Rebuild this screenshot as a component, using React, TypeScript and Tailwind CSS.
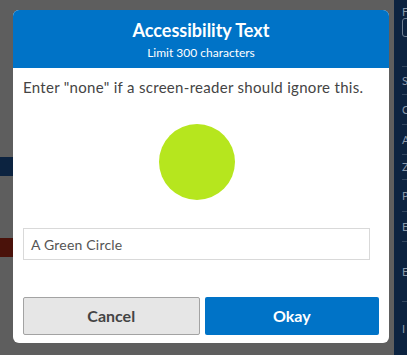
const font = { fontFamily: "Lato, 'Open Sans', sans-serif" };

type Section = { label?: string; h: number; box?: boolean };

const sections: Section[] = [
  { label: "F", h: 67, box: true },
  { label: "S", h: 28 },
  { label: "C", h: 30 },
  { label: "A", h: 30 },
  { label: "Z", h: 25 },
  { label: "P", h: 32 },
  { label: "E", h: 30 },
  { label: "E", h: 60 },
  { label: "I", h: 53 },
];

const Sidebar = () => (
  <div className="w-[13px] h-full bg-[#0c2340] pl-[8px] overflow-hidden shrink-0">
    {sections.map((s, i) => (
      <div key={i} className="flex flex-col" style={{ height: s.h }}>
        {s.box ? (
          <div className="flex flex-col pt-[6px]">
            <span className="text-[11px] leading-[12px] text-[#8a98aa]">{s.label}</span>
            <div className="w-[20px] h-[19px] border border-[#6f7f93] rounded-[3px]" />
          </div>
        ) : (
          <div className="flex-1 flex items-center">
            <span className="text-[11px] leading-[12px] text-[#8a98aa]">{s.label}</span>
          </div>
        )}
        {i < sections.length - 1 && <div className="mt-auto h-px w-[20px] bg-[#33475f]" />}
      </div>
    ))}
  </div>
);

export default function App() {
  return (
    <div className="w-[407px] h-[355px] bg-[#5e5e5e] flex overflow-hidden" style={font}>
      {/* left page strips behind the overlay */}
      <div className="w-[13px] shrink-0 flex flex-col">
        <div className="h-[157px]" />
        <div className="h-[19px] bg-[#0c2340]" />
        <div className="h-[62px]" />
        <div className="h-[19px] bg-[#4a120a]" />
      </div>

      {/* modal */}
      <div className="pt-[10px] shrink-0">
        <div className="w-[376px] h-[333px] bg-white rounded-[6px] flex flex-col overflow-hidden">
          <div className="h-[58px] bg-[#0073c7] flex flex-col items-center justify-center text-white">
            <div className="text-[18px] leading-[22px] font-bold">Accessibility Text</div>
            <div className="text-[12px] leading-[15px] mt-[4px]">Limit 300 characters</div>
          </div>
          <div className="pl-[10px] pr-[19px] pt-[9px] flex flex-col">
            <p className="text-[15px] leading-[20px] tracking-[0.3px] text-[#444]">
              Enter "none" if a screen-reader should ignore this.
            </p>
            <div className="mt-[27px] self-center w-[76px] h-[76px] rounded-full bg-[#b6e61e]" />
            <div className="mt-[28px] h-[32px] border border-[#d9d9d9] flex items-center px-[7px] text-[14px] tracking-[0.2px] text-[#555]">
              A Green Circle
            </div>
          </div>
          <div className="mt-[37px] px-[10px] flex gap-[5px]">
            <button className="flex-1 h-[38px] bg-[#e6e6e6] border border-[#a3a3a3] rounded-[2px] text-[16px] font-bold text-[#444]">
              Cancel
            </button>
            <button className="flex-1 h-[38px] bg-[#0073c7] rounded-[2px] text-[16px] font-bold text-white">
              Okay
            </button>
          </div>
        </div>
      </div>

      <div className="w-[5px] shrink-0" />
      <Sidebar />
    </div>
  );
}
